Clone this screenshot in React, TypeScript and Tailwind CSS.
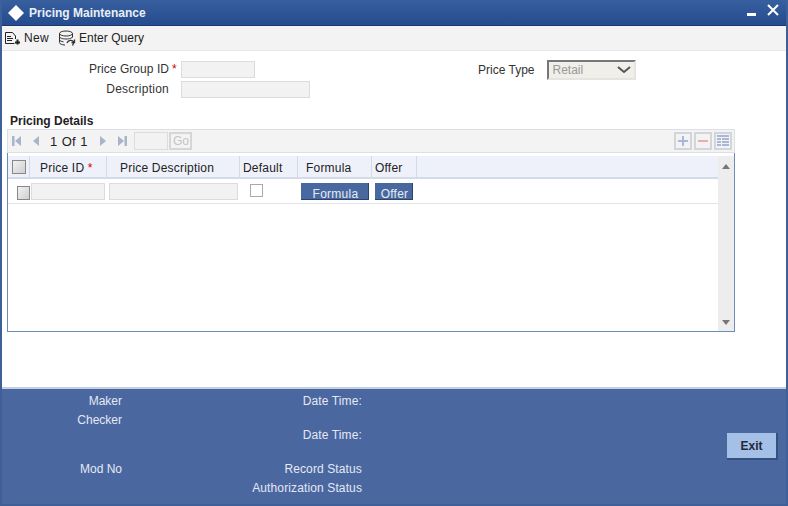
// Pricing Maintenance form window: title bar, toolbar, header fields,
// the details grid and the audit footer.

const star = <span className="text-[#d40000]">*</span>;

function NewIcon() {
  return (
    <svg width="17" height="16" viewBox="0 0 17 16" fill="none" stroke="#222" strokeWidth="1">
      <path d="M1.500 2.500h7l3 3.500v3M1.500 2.500v11h9" />
      <path d="M3 6.500h4M3 8.500h6M3 10.500h5" />
      <path d="M13.500 9.500v5M11 12.500h5" strokeWidth="2" />
    </svg>
  );
}

function QueryIcon() {
  return (
    <svg width="18" height="17" viewBox="0 0 18 17" fill="none" stroke="#333" strokeWidth="1">
      <ellipse cx="8" cy="3.500" rx="6.500" ry="2.500" />
      <path d="M1.500 3.500v9c0 1.400 2.600 2.500 5.500 2.500M14.500 3.500v4M1.500 6.500c0 1.400 2.600 2.500 6.500 2.500s6.500-1.100 6.500-2.500M1.500 9.500c0 1.200 1.800 2 4 2.400" />
      <path d="M9 13c1-3 5-3.500 7-1l-1.500 3.500M16.500 9.500v3h-3" strokeWidth="1.300" />
    </svg>
  );
}

function PagerIcon({ d }: { d: string }) {
  return (
    <svg width="11" height="12" viewBox="0 0 11 12" fill="#a9b4c9">
      <path d={d} />
    </svg>
  );
}

function GridAction({ children }: { children: React.ReactNode }) {
  return (
    <div className="flex h-[18px] w-[18px] items-center justify-center border-2 border-[#d3d5da] bg-[#f3f3f3]">
      {children}
    </div>
  );
}

function HeaderCell({ width, children }: { width: string; children: React.ReactNode }) {
  return (
    <div className={`flex h-full shrink-0 items-center border-r border-[#d3dbe8] pt-[2px] ${width}`}>
      {children}
    </div>
  );
}

function ReadOnlyField({ width }: { width: string }) {
  return <div className={`h-[17px] border border-[#dcdcdc] bg-[#f2f2f2] ${width}`} />;
}

function FooterRow({ children }: { children: React.ReactNode }) {
  return <div className="flex h-[17px] items-center justify-end">{children}</div>;
}

export default function App() {
  return (
    <div
      className="flex h-[506px] w-[788px] flex-col overflow-hidden border-x-2 border-[#3f5f98] bg-white text-[12px] text-[#333]"
      style={{ fontFamily: '"Liberation Sans", Arial, sans-serif' }}
    >
      {/* title bar */}
      <div className="flex h-[26px] shrink-0 items-center justify-between border-b border-[#1c3a70] bg-gradient-to-b from-[#38609f] to-[#244c8e] pr-[7px]">
        <div className="flex items-center">
          <svg width="18" height="18" viewBox="0 0 18 18" className="ml-[5px]">
            <path d="M9 1l8 8-8 8-8-8z" fill="#fff" />
          </svg>
          <span className="ml-[4px] text-[12px] font-bold text-[#e8eef8]">Pricing Maintenance</span>
        </div>
        <div className="flex items-center gap-[11px]">
          <div className="mt-[3px] h-[3px] w-[9px] bg-white" />
          <svg width="12" height="12" viewBox="0 0 12 12" stroke="#fff" strokeWidth="2" className="mb-[5px]">
            <path d="M1 1l10 10M11 1L1 11" />
          </svg>
        </div>
      </div>

      {/* toolbar */}
      <div className="flex h-[25px] shrink-0 items-center border-b border-[#e8e8e8] bg-[#f3f3f3] text-[#222]">
        <div className="ml-[2px] flex items-center gap-[3px]">
          <NewIcon />
          <span className="tracking-[0.3px]">New</span>
        </div>
        <div className="ml-[9px] flex items-center gap-[3px]">
          <QueryIcon />
          <span className="tracking-[0.05px]">Enter Query</span>
        </div>
      </div>

      {/* header fields */}
      <div className="flex h-[54px] shrink-0 pt-[9px]">
        <div className="flex w-[476px] shrink-0 flex-col gap-[2px]">
          <div className="flex items-center">
            <span className="w-[167px] text-right tracking-[0.05px]">Price Group ID</span>
            <span className="ml-[3px] w-[9px]">{star}</span>
            <ReadOnlyField width="w-[74px]" />
          </div>
          <div className="flex items-center">
            <span className="w-[167px] text-right tracking-[0.25px]">Description</span>
            <span className="ml-[3px] w-[9px]" />
            <ReadOnlyField width="w-[129px]" />
          </div>
        </div>
        <div className="flex h-[20px] items-center">
          <span>Price Type</span>
          <div className="ml-[13px] flex h-[20px] w-[89px] items-center justify-between border-2 border-b-[#e5e5e0] border-l-[#777] border-r-[#e5e5e0] border-t-[#777] bg-[#f0efe9] pl-[3px] pr-[3px] text-[#9a9a9a]">
            <span>Retail</span>
            <svg width="14" height="8" viewBox="0 0 14 8" fill="none" stroke="#555" strokeWidth="2">
              <path d="M1 1l6 5 6-5" />
            </svg>
          </div>
        </div>
      </div>

      {/* pricing details */}
      <div className="ml-[8px] flex h-[24px] shrink-0 items-end pb-[2px] font-bold leading-none text-[#222]">
        Pricing Details
      </div>

      <div className="ml-[5px] flex h-[24px] w-[728px] shrink-0 items-center justify-between border border-[#dbdfe6] bg-[#f3f3f3]">
        <div className="flex items-center">
          <div className="ml-[3px]"><PagerIcon d="M1 1h2.500v10H1zM10 1v10L4 6z" /></div>
          <div className="ml-[9px]"><PagerIcon d="M8 1v10L2 6z" /></div>
          <span className="ml-[8px] pt-[1px] text-[13px] text-[#222] [word-spacing:1px]">1 Of 1</span>
          <div className="ml-[10px]"><PagerIcon d="M3 1v10l6-5z" /></div>
          <div className="ml-[9px]"><PagerIcon d="M1 1v10l6-5zM7.500 1H10v10H7.500z" /></div>
          <div className="ml-[6px] h-[18px] w-[34px] border border-[#dcdcdc] bg-[#f2f2f2]" />
          <div className="ml-[1px] flex h-[18px] w-[23px] items-center justify-center border-2 border-[#d6d6d6] text-[#c4c4c4]">Go</div>
        </div>
        <div className="mr-[2px] flex items-center gap-[2px]">
          <GridAction>
            <svg width="12" height="12" viewBox="0 0 12 12" fill="#a9b7d9"><path d="M5 1h2v4h4v2H7v4H5V7H1V5h4z" /></svg>
          </GridAction>
          <GridAction>
            <svg width="12" height="12" viewBox="0 0 12 12" fill="#eeaab0"><path d="M1 5h10v2H1z" /></svg>
          </GridAction>
          <GridAction>
            <svg width="14" height="14" viewBox="0 0 14 14" fill="#a9b7d9"><path d="M1 1h12v2H1zM1 4h4v2H1zM6 4h7v2H6zM1 7h4v2H1zM6 7h7v2H6zM1 10h4v2H1zM6 10h7v2H6z" /></svg>
          </GridAction>
        </div>
      </div>

      <div className="ml-[5px] flex h-[179px] w-[728px] shrink-0 border-x border-b border-l-[#6d8db8] border-r-[#6d8db8] border-b-[#6d8db8] border-t-0 pt-[3px]">
        <div className="flex min-w-0 flex-1 flex-col">
          {/* grid header */}
          <div className="flex h-[23px] shrink-0 items-center border-b-2 border-[#d3dbe8] bg-[#eef1fa] tracking-[0.2px] text-[#222]">
            <HeaderCell width="w-[22px] justify-center">
              <div className="mb-[2px] h-[14px] w-[14px] border border-[#888] bg-gradient-to-br from-[#f2f2f2] to-[#cfcfcf]" />
            </HeaderCell>
            <HeaderCell width="w-[77px] pl-[10px]">
              <span>Price ID {star}</span>
            </HeaderCell>
            <HeaderCell width="w-[133px] pl-[13px]">Price Description</HeaderCell>
            <HeaderCell width="w-[58px] pl-[3px]">Default</HeaderCell>
            <HeaderCell width="w-[74px] pl-[8px]">Formula</HeaderCell>
            <HeaderCell width="w-[45px] pl-[3px]">Offer</HeaderCell>
          </div>
          {/* grid row */}
          <div className="flex h-[25px] shrink-0 items-center border-b border-[#dfe3ea]">
            <div className="ml-[9px] mt-[3px] h-[14px] w-[13px] border border-[#888] bg-gradient-to-br from-[#f2f2f2] to-[#cfcfcf]" />
            <div className="ml-[1px]"><ReadOnlyField width="w-[74px]" /></div>
            <div className="ml-[4px]"><ReadOnlyField width="w-[129px]" /></div>
            <div className="mb-[2px] ml-[12px] h-[13px] w-[13px] border border-[#aaa] bg-white" />
            <button className="ml-[38px] h-[17px] w-[68px] border-b border-r border-[#2c4468] bg-[#48689f] pl-[2px] pt-[5px] text-center text-[12px] leading-none tracking-[0.25px] text-[#e6ecf6]">Formula</button>
            <button className="ml-[6px] h-[17px] w-[38px] border-b border-r border-[#2c4468] bg-[#48689f] pl-[2px] pt-[5px] text-center text-[12px] leading-none tracking-[0.25px] text-[#e6ecf6]">Offer</button>
          </div>
        </div>
        {/* scrollbar */}
        <div className="flex w-[16px] shrink-0 flex-col items-center justify-between bg-[#ededed] pb-[6px] pt-[8px]">
          <svg width="8" height="5" viewBox="0 0 8 5" fill="#777"><path d="M4 0l4 5H0z" /></svg>
          <svg width="8" height="5" viewBox="0 0 8 5" fill="#777"><path d="M4 5l4-5H0z" /></svg>
        </div>
      </div>

      <div className="flex-1" />

      {/* audit footer */}
      <div className="flex h-[119px] shrink-0 border-b-2 border-t-2 border-b-[#3f5f98] border-t-[#c3cfe2] bg-[#4a67a0] pt-[3px] text-[#e4e9f3]">
        <div className="flex w-[120px] shrink-0 flex-col gap-[2px]">
          <FooterRow>Maker</FooterRow>
          <FooterRow>Checker</FooterRow>
          <div className="h-[28px]" />
          <FooterRow>Mod No</FooterRow>
        </div>
        <div className="flex w-[240px] shrink-0 flex-col tracking-[0.12px]">
          <FooterRow>Date Time:</FooterRow>
          <div className="h-[17px]" />
          <FooterRow>Date Time:</FooterRow>
          <div className="h-[17px]" />
          <FooterRow>Record Status</FooterRow>
          <div className="h-[2px]" />
          <FooterRow>Authorization Status</FooterRow>
        </div>
        <div className="flex flex-1 justify-end pr-[8px] pt-[41px]">
          <button className="h-[27px] w-[51px] border-b-2 border-r-2 border-[#34507f] bg-[#a4c0e6] text-[12px] font-bold text-[#1f2a3a]">
            Exit
          </button>
        </div>
      </div>
    </div>
  );
}
